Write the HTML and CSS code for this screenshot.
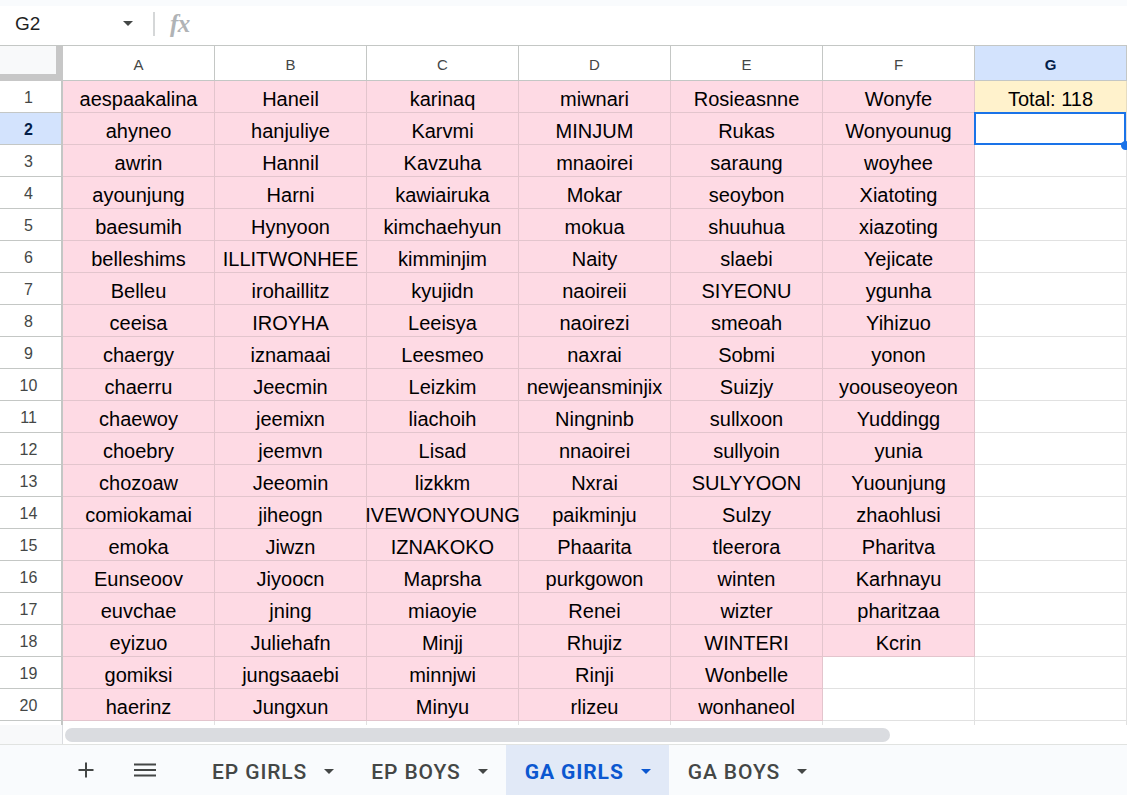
FILE: index.html
```html
<!DOCTYPE html>
<html lang="en">
<head>
  <meta charset="UTF-8">
  <meta name="viewport" content="width=device-width, initial-scale=1.0">
  <title>GA GIRLS</title>
  <link rel="stylesheet" href="styles.css">
</head>
<body>
  <div class="formula-bar">
    <div class="name-box">
      <span>G2</span>
      <span class="caret"></span>
    </div>
    <div class="divider"></div>
    <span class="fx">fx</span>
  </div>

  <div class="sheet" id="sheet"></div>

  <div class="hscroll">
    <div class="hscroll-corner"></div>
    <div class="hscroll-track"><div class="thumb"></div></div>
  </div>

  <!-- Sheet tabs -->
  <div class="tabbar">
    <button class="icon-btn">
      <svg width="24" height="24" viewBox="0 0 24 24"><path d="M4.5 12h15M12 4.5v15" stroke="#444746" stroke-width="2" fill="none"/></svg>
    </button>
    <button class="icon-btn menu">
      <svg width="24" height="24" viewBox="0 0 24 24"><path d="M1 6.5h22M1 12h22M1 17.5h22" stroke="#444746" stroke-width="2" fill="none"/></svg>
    </button>
    <div class="tab first">EP GIRLS <span class="caret"></span></div>
    <div class="tab">EP BOYS <span class="caret"></span></div>
    <div class="tab active">GA GIRLS <span class="caret"></span></div>
    <div class="tab">GA BOYS <span class="caret"></span></div>
  </div>

  <script>
    let columns = [
      ["aespaakalina","ahyneo","awrin","ayounjung","baesumih","belleshims","Belleu","ceeisa","chaergy","chaerru","chaewoy","choebry","chozoaw","comiokamai","emoka","Eunseoov","euvchae","eyizuo","gomiksi","haerinz"],
      ["Haneil","hanjuliye","Hannil","Harni","Hynyoon","ILLITWONHEE","irohaillitz","IROYHA","iznamaai","Jeecmin","jeemixn","jeemvn","Jeeomin","jiheogn","Jiwzn","Jiyoocn","jning","Juliehafn","jungsaaebi","Jungxun"],
      ["karinaq","Karvmi","Kavzuha","kawiairuka","kimchaehyun","kimminjim","kyujidn","Leeisya","Leesmeo","Leizkim","liachoih","Lisad","lizkkm","IVEWONYOUNG","IZNAKOKO","Maprsha","miaoyie","Minjj","minnjwi","Minyu"],
      ["miwnari","MINJUM","mnaoirei","Mokar","mokua","Naity","naoireii","naoirezi","naxrai","newjeansminjix","Ningninb","nnaoirei","Nxrai","paikminju","Phaarita","purkgowon","Renei","Rhujiz","Rinji","rlizeu"],
      ["Rosieasnne","Rukas","saraung","seoybon","shuuhua","slaebi","SIYEONU","smeoah","Sobmi","Suizjy","sullxoon","sullyoin","SULYYOON","Sulzy","tleerora","winten","wizter","WINTERI","Wonbelle","wonhaneol"],
      ["Wonyfe","Wonyounug","woyhee","Xiatoting","xiazoting","Yejicate","ygunha","Yihizuo","yonon","yoouseoyeon","Yuddingg","yunia","Yuounjung","zhaohlusi","Pharitva","Karhnayu","pharitzaa","Kcrin"]
    ];
    let letters = ["A","B","C","D","E","F","G"];
    let sheet = document.getElementById("sheet");
    let html = '<div class="corner"></div>';

    letters.forEach(l => {
      html += `<div class="ch${l === 'G' ? ' active' : ''}">${l}</div>`;
    });

    for (let r = 0; r < 21; r++) {
      let num = r + 1;
      html += `<div class="rh${num === 2 ? ' active' : ''}">${num < 21 ? num : ''}</div>`;
      columns.forEach(col => {
        if (col[r] !== undefined) html += `<div class="cell pink">${col[r]}</div>`;
        else html += '<div class="cell"></div>';
      });
      if (r === 0) html += '<div class="cell total">Total: 118</div>';
      else if (r === 1) html += '<div class="cell selected"></div>';
      else html += '<div class="cell"></div>';
    }
    sheet.innerHTML = html;
  </script>
</body>
</html>
```

FILE: styles.css
```css
*, *:before, *:after{
  padding: 0;
  margin: 0;
  box-sizing: border-box;
}
body{
  width: 1127px;
  height: 795px;
  overflow: hidden;
  background: #ffffff;
  font-family: "Liberation Sans", Arial, sans-serif;
  display: flex;
  flex-direction: column;
}
.caret{
  width: 0;
  height: 0;
  border-left: 5px solid transparent;
  border-right: 5px solid transparent;
  border-top: 5px solid #444746;
}

/* Formula bar */
.formula-bar{
  height: 46px;
  flex-shrink: 0;
  border-top: 6px solid #f9fbfd;
  border-bottom: 1px solid #c4c7c5;
  display: flex;
  align-items: center;
  padding-bottom: 4px;
}
.name-box{
  width: 147px;
  padding: 0 14px 0 15px;
  display: flex;
  justify-content: space-between;
  align-items: center;
  font-size: 19px;
  color: #1f1f1f;
}
.divider{
  width: 2px;
  height: 24px;
  margin-left: 6px;
  background: #d5d7d8;
}
.fx{
  margin-left: 15px;
  font-family: "Liberation Serif", serif;
  font-style: italic;
  font-weight: bold;
  font-size: 25px;
  color: #b0b3b6;
  letter-spacing: -0.5px;
}

/* Grid */
.sheet{
  height: 679px;
  flex-shrink: 0;
  overflow: hidden;
  display: grid;
  grid-template-columns: 63px repeat(6, 152px) 152px;
  grid-template-rows: 35px;
  grid-auto-rows: 32px;
}
.corner{
  background: #f8f9fa;
  border-right: 7px solid #c7c7c7;
  border-bottom: 7px solid #c7c7c7;
}
.ch{
  display: flex;
  align-items: center;
  justify-content: center;
  font-size: 15px;
  color: #444746;
  border-right: 1px solid #c4c7c5;
  border-bottom: 1px solid #c4c7c5;
  padding-top: 2px;
}
.rh{
  display: flex;
  align-items: center;
  justify-content: center;
  font-size: 16px;
  color: #444746;
  border-right: 2px solid #c4c7c5;
  border-bottom: 1px solid #c4c7c5;
  padding: 3px 4px 0 0;
}
.ch.active, .rh.active{
  background: #d3e3fd;
  color: #041e49;
  font-weight: bold;
}
.cell{
  display: flex;
  align-items: flex-end;
  justify-content: center;
  padding-bottom: 1px;
  font-size: 20px;
  color: #000000;
  white-space: nowrap;
  border-right: 1px solid #e1e1e1;
  border-bottom: 1px solid #e1e1e1;
}
.cell.pink{
  background: #fedae4;
  border-color: #e3c5cd;
}
.cell.total{
  background: #fff2cc;
  border-color: #e6dcc0;
}
.cell.selected{
  position: relative;
}
.cell.selected:after{
  content: "";
  position: absolute;
  top: -1px;
  left: -1px;
  right: 0;
  bottom: -1px;
  border: 2px solid #1a73e8;
  z-index: 2;
}
.cell.selected:before{
  content: "";
  position: absolute;
  right: -4px;
  bottom: -6px;
  width: 9px;
  height: 9px;
  border-radius: 50%;
  background: #1a73e8;
  z-index: 3;
}

/* Horizontal scrollbar */
.hscroll{
  height: 20px;
  flex-shrink: 0;
  display: flex;
  border-bottom: 1px solid #e1e3e1;
}
.hscroll-corner{
  width: 63px;
  background: #f8f9fa;
  border-right: 1px solid #dadce0;
}
.hscroll-track{
  flex: 1;
  padding: 3px 0 0 2px;
}
.thumb{
  width: 825px;
  height: 14px;
  border-radius: 7px;
  background: #dadce0;
}

/* Tabs */
.tabbar{
  flex: 1;
  background: #f9fbfd;
  display: flex;
  align-items: stretch;
  padding-left: 74px;
}
.icon-btn{
  width: 24px;
  border: none;
  background: none;
  display: flex;
  align-items: center;
  justify-content: center;
}
.icon-btn.menu{
  margin-left: 35px;
}
.tab{
  display: flex;
  align-items: center;
  gap: 17px;
  padding: 3px 18px 0 19px;
  font-family: Roboto, "Liberation Sans", sans-serif;
  font-weight: 500;
  font-size: 21px;
  letter-spacing: 0.9px;
  color: #444746;
}
.tab.first{
  margin-left: 36px;
}
.tab.active{
  background: #e1e9f7;
  color: #0b57d0;
  font-weight: 700;
}
.tab.active .caret{
  border-top-color: #0b57d0;
}
```
